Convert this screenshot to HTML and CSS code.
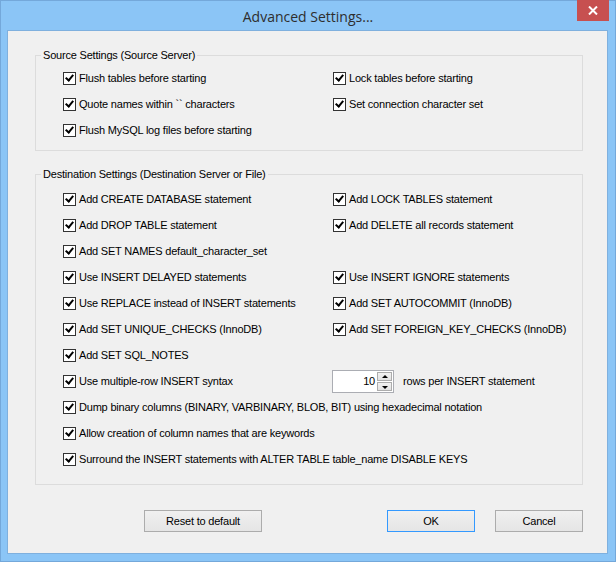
FILE: index.html
```html
<!doctype html>
<html lang="en">
<head>
    <meta charset="UTF-8">
    <title>Advanced Settings...</title>
    <link rel="stylesheet" href="styles.css">
</head>
<body>
<div class="window">
    <div class="titlebar">
        <span class="title">Advanced Settings...</span>
        <div class="close">
            <svg width="10" height="9" viewBox="0 0 10 9"><path d="M1 0.5 L9 8.5 M9 0.5 L1 8.5" stroke="#fff" stroke-width="2"/></svg>
        </div>
    </div>
    <div class="client">
        <fieldset class="group source">
            <legend>Source Settings (Source Server)</legend>
            <div class="opts">
                <label class="opt"><span class="box"></span>Flush tables before starting</label>
                <label class="opt"><span class="box"></span>Lock tables before starting</label>
                <label class="opt"><span class="box"></span>Quote names within `` characters</label>
                <label class="opt"><span class="box"></span>Set connection character set</label>
                <label class="opt"><span class="box"></span>Flush MySQL log files before starting</label>
            </div>
        </fieldset>

        <fieldset class="group dest">
            <legend>Destination Settings (Destination Server or File)</legend>
            <div class="opts">
                <label class="opt"><span class="box"></span>Add CREATE DATABASE statement</label>
                <label class="opt"><span class="box"></span>Add LOCK TABLES statement</label>
                <label class="opt"><span class="box"></span>Add DROP TABLE statement</label>
                <label class="opt"><span class="box"></span>Add DELETE all records statement</label>
                <label class="opt full"><span class="box"></span>Add SET NAMES default_character_set</label>
                <label class="opt"><span class="box"></span>Use INSERT DELAYED statements</label>
                <label class="opt"><span class="box"></span>Use INSERT IGNORE statements</label>
                <label class="opt"><span class="box"></span>Use REPLACE instead of INSERT statements</label>
                <label class="opt"><span class="box"></span>Add SET AUTOCOMMIT (InnoDB)</label>
                <label class="opt"><span class="box"></span>Add SET UNIQUE_CHECKS (InnoDB)</label>
                <label class="opt"><span class="box"></span>Add SET FOREIGN_KEY_CHECKS (InnoDB)</label>
                <label class="opt full"><span class="box"></span>Add SET SQL_NOTES</label>
                <label class="opt"><span class="box"></span>Use multiple-row INSERT syntax</label>
                <div class="rows-per">
                    <div class="spin">
                        <span class="spin-value">10</span>
                        <div class="spin-btns">
                            <span class="spin-btn up"></span>
                            <span class="spin-btn down"></span>
                        </div>
                    </div>
                    <span>rows per INSERT statement</span>
                </div>
                <label class="opt full"><span class="box"></span>Dump binary columns (BINARY, VARBINARY, BLOB, BIT) using hexadecimal notation</label>
                <label class="opt full"><span class="box"></span>Allow creation of column names that are keywords</label>
                <label class="opt full"><span class="box"></span>Surround the INSERT statements with ALTER TABLE table_name DISABLE KEYS</label>
            </div>
        </fieldset>

        <div class="actions">
            <button class="btn reset">Reset to default</button>
            <button class="btn ok">OK</button>
            <button class="btn">Cancel</button>
        </div>
    </div>
</div>
</body>
</html>
```

FILE: styles.css
```css
body {
    margin: 0;
    font-family: "Liberation Sans", Arial, sans-serif;
    font-size: 11px;
    letter-spacing: -0.2px;
    color: #000;
}
.window {
    width: 616px;
    height: 562px;
    box-sizing: border-box;
    background: #8bc5f6;
    border: 1px solid #74a8da;
    display: flex;
    flex-direction: column;
    position: relative;
}
.titlebar {
    height: 29px;
    display: flex;
    align-items: center;
    justify-content: center;
}
.title {
    font-family: "Open Sans", "Noto Sans", sans-serif;
    font-size: 14px;
    letter-spacing: 0;
    color: #2e2e2e;
    margin-top: 2px;
}
.close {
    position: absolute;
    top: -1px;
    right: 6px;
    width: 32px;
    height: 21px;
    background: #c75050;
    display: flex;
    align-items: center;
    justify-content: center;
}
.client {
    flex: 1;
    margin: 0 7px 7px 6px;
    background: #f0f0f0;
    border: 1px solid #7fb0de;
    padding: 18px 24px 0 27px;
}
.group {
    margin: 0;
    padding: 0;
    border: 1px solid #dcdcdc;
}
.group legend {
    margin-left: 5px;
    padding: 0 2px;
}
.opts {
    display: grid;
    grid-template-columns: 270px 1fr;
    grid-auto-rows: 26px;
    padding-left: 27px;
}
.source .opts {
    padding-top: 4px;
    padding-bottom: 7px;
}
.dest {
    margin-top: 17px;
}
.dest .opts {
    padding-top: 6px;
    padding-bottom: 12px;
}
.opt {
    display: flex;
    align-items: center;
    white-space: nowrap;
}
.full {
    grid-column: 1 / 3;
}
.box {
    width: 11px;
    height: 11px;
    border: 1px solid #333;
    background: #fff;
    margin-right: 3px;
    position: relative;
    flex-shrink: 0;
}
.box::after {
    content: "";
    position: absolute;
    left: 3px;
    top: 0px;
    width: 3px;
    height: 6px;
    border-right: 2px solid #000;
    border-bottom: 2px solid #000;
    transform: rotate(40deg);
}
.rows-per {
    display: flex;
    align-items: center;
    margin-left: -1px;
}
.spin {
    width: 60px;
    height: 21px;
    border: 1px solid #abadb3;
    background: #fff;
    display: flex;
    align-items: center;
    margin-right: 9px;
}
.spin-value {
    flex: 1;
    text-align: right;
    padding-right: 2px;
}
.spin-btns {
    display: flex;
    flex-direction: column;
    gap: 1px;
    width: 15px;
    height: 19px;
    margin-right: 1px;
}
.spin-btn {
    flex: 1;
    background: linear-gradient(#f2f2f2, #e2e2e2);
    border: 1px solid #acacac;
    position: relative;
}
.spin-btn::after {
    content: "";
    position: absolute;
    left: 4px;
    border-left: 3px solid transparent;
    border-right: 3px solid transparent;
}
.up::after {
    top: 2px;
    border-bottom: 3px solid #000;
}
.down::after {
    top: 3px;
    border-top: 3px solid #000;
}
.actions {
    display: flex;
    margin-top: 25px;
    gap: 20px;
}
.btn {
    height: 22px;
    width: 88px;
    font-family: inherit;
    font-size: 11px;
    letter-spacing: -0.2px;
    background: linear-gradient(#f0f0f0, #e5e5e5);
    border: 1px solid #acacac;
    padding: 0;
    color: #000;
}
.reset {
    width: 118px;
    margin-left: 109px;
    margin-right: 105px;
}
.ok {
    border-color: #3399ff;
}
```
